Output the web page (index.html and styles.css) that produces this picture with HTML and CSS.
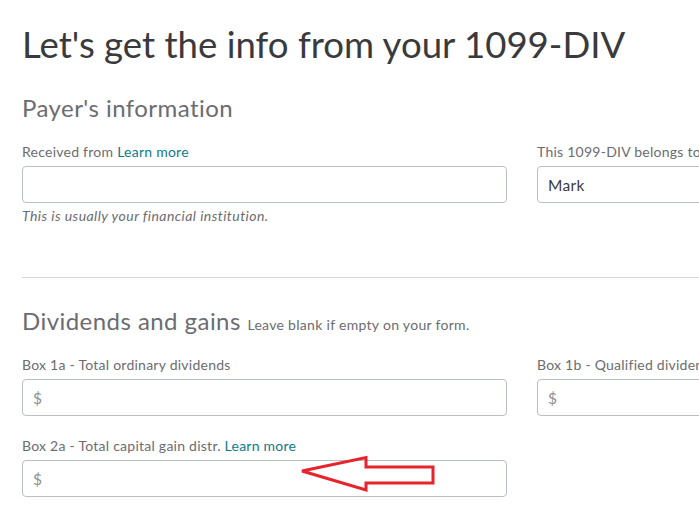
FILE: index.html
```html
<!DOCTYPE html>
<html lang="en">
<head>
<meta charset="utf-8">
<title>1099-DIV</title>
<link rel="stylesheet" href="styles.css">
</head>
<body>
<div class="page">
  <h1 class="title">Let's get the info from your 1099-DIV</h1>

  <section class="section">
    <h2 class="section-title">Payer's information</h2>
    <div class="row">
      <div class="field">
        <label class="label">Received from <a class="link" href="#">Learn more</a></label>
        <div class="input"></div>
        <p class="hint">This is usually your financial institution.</p>
      </div>
      <div class="field">
        <label class="label">This 1099-DIV belongs to...</label>
        <div class="input filled">Mark</div>
      </div>
    </div>
  </section>

  <hr class="divider">

  <section class="section">
    <h2 class="section-title section-title-2">Dividends and gains <span class="section-note">Leave blank if empty on your form.</span></h2>
    <div class="row row-1b">
      <div class="field">
        <label class="label">Box 1a - Total ordinary dividends</label>
        <div class="input money">$</div>
      </div>
      <div class="field">
        <label class="label">Box 1b - Qualified dividends</label>
        <div class="input money">$</div>
      </div>
    </div>
    <div class="row row-2">
      <div class="field">
        <label class="label">Box 2a - Total capital gain distr. <a class="link" href="#">Learn more</a></label>
        <div class="input money">$</div>
      </div>
    </div>
  </section>
</div>
<svg class="arrow" width="699" height="529" viewBox="0 0 699 529" aria-hidden="true">
  <polygon points="302,471 366,457.5 366,467 433,467 433,483 366,483 366,490" fill="none" stroke="#e8232b" stroke-width="3" stroke-linejoin="miter"/>
</svg>
</body>
</html>
```

FILE: styles.css
```css
html, body {
  margin: 0;
  padding: 0;
  background: #ffffff;
}
body {
  width: 699px;
  height: 529px;
  overflow: hidden;
  position: relative;
  font-family: Lato, "Noto Sans", sans-serif;
  color: #393a3d;
}
.page {
  padding-left: 22px;
  width: 1100px;
}
.title {
  margin: 22px 0 0 0;
  font-size: 36.6px;
  font-weight: 400;
  line-height: 44px;
  color: #393a3d;
}
.section-title {
  margin: 0;
  font-size: 24px;
  font-weight: 400;
  line-height: 30px;
  color: #6b6c72;
  letter-spacing: 0.45px;
}
.section:first-of-type .section-title {
  margin-top: 27px;
}
.section-note {
  font-size: 14px;
  color: #6b6c72;
  letter-spacing: 0.3px;
}
.row {
  display: grid;
  grid-template-columns: 485px 485px;
  column-gap: 30px;
  margin-top: 20px;
}
.row-1b {
  margin-top: 16px;
}
.row-2 {
  margin-top: 21px;
}
.field {
  display: flex;
  flex-direction: column;
}
.label {
  font-size: 14px;
  line-height: 18px;
  color: #6b6c72;
  margin-bottom: 5px;
  letter-spacing: 0.25px;
}
.link {
  color: #0d7a8b;
  text-decoration: none;
}
.input {
  box-sizing: border-box;
  height: 37px;
  border: 1px solid #babec5;
  border-radius: 4px;
  padding: 0 10px;
  display: flex;
  align-items: center;
  font-size: 15.5px;
  color: #393a3d;
  letter-spacing: 0.3px;
}
.money {
  color: #8d9096;
}
.hint {
  margin: 5px 0 0 0;
  font-size: 14px;
  line-height: 16px;
  font-style: italic;
  color: #6b6c72;
  letter-spacing: 0.45px;
}
.divider {
  border: 0;
  border-top: 1px solid #d4d7dc;
  margin: 53px 0 0 0;
}
.section-title-2 {
  margin-top: 28px;
}
.arrow {
  position: absolute;
  left: 0;
  top: 0;
  pointer-events: none;
}
```
